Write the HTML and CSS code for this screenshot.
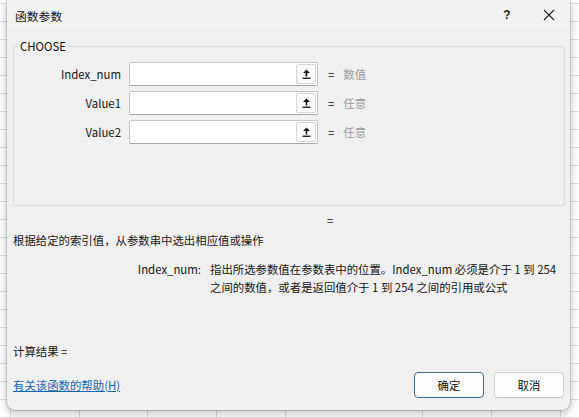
FILE: index.html
```html
<!DOCTYPE html>
<html lang="zh-CN">
<head>
<meta charset="utf-8">
<title>函数参数</title>
<link rel="stylesheet" href="styles.css">
</head>
<body>
<div class="dialog">
  <div class="titlebar">
    <span class="title">函数参数</span>
    <span class="tb-btn help">?</span>
    <span class="tb-btn close">
      <svg width="12" height="12" viewBox="0 0 12 12"><path d="M1 1L11 11M11 1L1 11" stroke="#222" stroke-width="1.1" fill="none"/></svg>
    </span>
  </div>

  <fieldset class="group">
    <legend>CHOOSE</legend>
    <div class="args">
      <label class="arg-label">Index_num</label>
      <div class="field">
        <span class="ref-btn"><svg width="9" height="10" viewBox="0 0 9 10"><path d="M4.5 0.5L8 4H5.3V7.5H3.7V4H1Z" fill="#111"/><rect x="0.5" y="8.6" width="8" height="1.3" fill="#111"/></svg></span>
      </div>
      <span class="eq">=</span>
      <span class="val">数值</span>

      <label class="arg-label">Value1</label>
      <div class="field">
        <span class="ref-btn"><svg width="9" height="10" viewBox="0 0 9 10"><path d="M4.5 0.5L8 4H5.3V7.5H3.7V4H1Z" fill="#111"/><rect x="0.5" y="8.6" width="8" height="1.3" fill="#111"/></svg></span>
      </div>
      <span class="eq">=</span>
      <span class="val">任意</span>

      <label class="arg-label">Value2</label>
      <div class="field">
        <span class="ref-btn"><svg width="9" height="10" viewBox="0 0 9 10"><path d="M4.5 0.5L8 4H5.3V7.5H3.7V4H1Z" fill="#111"/><rect x="0.5" y="8.6" width="8" height="1.3" fill="#111"/></svg></span>
      </div>
      <span class="eq">=</span>
      <span class="val">任意</span>
    </div>
  </fieldset>

  <div class="result-eq">=</div>
  <div class="desc">根据给定的索引值，从参数串中选出相应值或操作</div>

  <div class="arg-help">
    <span class="ah-label">Index_num:</span>
    <span class="ah-text">指出所选参数值在参数表中的位置。Index_num 必须是介于 1 到 254 之间的数值，或者是返回值介于 1 到 254 之间的引用或公式</span>
  </div>

  <div class="calc">计算结果 =</div>

  <div class="footer">
    <a class="help-link" href="#">有关该函数的帮助(H)</a>
    <div class="buttons">
      <button class="btn default">确定</button>
      <button class="btn">取消</button>
    </div>
  </div>
</div>
</body>
</html>
```

FILE: styles.css
```css
html, body {
  margin: 0;
  padding: 0;
}
body {
  width: 579px;
  height: 418px;
  overflow: hidden;
  font-family: "Noto Sans CJK SC", "Noto Sans", sans-serif;
  font-size: 11.4px;
  color: #151515;
  background-color: #ffffff;
  background-image:
    repeating-linear-gradient(to right, transparent 0 10px, #dcdcdc 10px 11px, transparent 11px 68.7px),
    repeating-linear-gradient(to bottom, transparent 0 3px, #dcdcdc 3px 4px, transparent 4px 18px);
}
.dialog {
  margin-left: 7px;
  width: 563px;
  height: 410px;
  background: #f0f0f0;
  border-radius: 0 0 8px 8px;
  box-shadow: 0 0 0 1px rgba(0,0,0,0.13), 0 3px 10px rgba(0,0,0,0.28);
  display: flex;
  flex-direction: column;
  overflow: hidden;
}
.titlebar {
  height: 30px;
  display: flex;
  align-items: center;
  background: #f3f3f3;
}
.title {
  flex: 1;
  padding-left: 8px;
  font-size: 11.8px;
  color: #111;
}
.tb-btn {
  width: 42px;
  height: 30px;
  display: flex;
  align-items: center;
  justify-content: center;
  color: #222;
}
.help {
  font-family: "Liberation Sans", sans-serif;
  font-weight: bold;
  font-size: 12px;
}
.group {
  margin: 8px 5px 0 6px;
  padding: 8px 0 61px 0;
  border: 1px solid #dcdcdc;
  border-radius: 2px;
  min-width: 0;
}
.group legend {
  margin-left: 4px;
  padding: 0 2px;
  line-height: 16px;
  color: #111;
}
.args {
  display: grid;
  grid-template-columns: 115px 189px auto auto;
  grid-auto-rows: 24px;
  row-gap: 5px;
  align-items: center;
  justify-content: start;
}
.arg-label {
  text-align: right;
  padding-right: 8px;
  color: #151515;
}
.field {
  box-sizing: border-box;
  height: 24px;
  background: #fff;
  border: 1px solid #c6c6c6;
  border-bottom-color: #a8a8a8;
  border-radius: 2px;
  display: flex;
  justify-content: flex-end;
  align-items: center;
  padding-right: 1px;
}
.ref-btn {
  box-sizing: border-box;
  width: 20px;
  height: 20px;
  border: 1px solid #d6d6d6;
  border-radius: 2px;
  background: #fbfbfb;
  display: flex;
  align-items: center;
  justify-content: center;
}
.eq {
  padding-left: 10px;
  color: #151515;
}
.val {
  padding-left: 9px;
  color: #9a9a9a;
}
.result-eq {
  margin-top: 6px;
  line-height: 16px;
  padding-left: 320px;
}
.desc {
  margin-top: 4px;
  padding-left: 6px;
  line-height: 16px;
}
.arg-help {
  margin-top: 12px;
  display: grid;
  grid-template-columns: 194px 356px;
  column-gap: 9px;
  line-height: 18px;
}
.ah-label {
  text-align: right;
}
.calc {
  margin-top: 47px;
  padding-left: 6px;
  line-height: 16px;
}
.footer {
  margin-top: 13px;
  display: flex;
  align-items: center;
  justify-content: space-between;
  padding: 0 6px 0 6px;
}
.help-link {
  color: #1565b5;
  text-decoration: underline;
}
.buttons {
  display: flex;
  gap: 10px;
}
.btn {
  box-sizing: border-box;
  width: 70px;
  height: 26px;
  font-family: inherit;
  font-size: 11.4px;
  color: #111;
  background: #fdfdfd;
  border: 1px solid #d2d2d2;
  border-bottom-color: #c0c0c0;
  border-radius: 4px;
  padding: 0;
}
.btn.default {
  border: 1px solid #3d6b8f;
}
```
